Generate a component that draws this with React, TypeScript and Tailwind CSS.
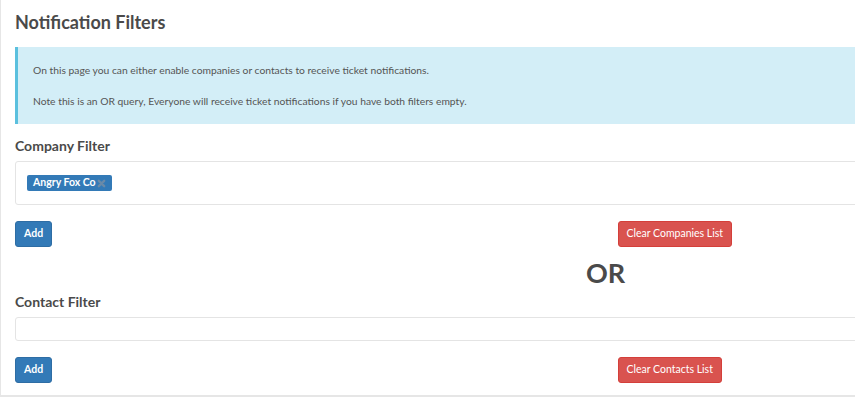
import React from 'react';

function RemoveIcon() {
  return (
    <svg width="9" height="9" viewBox="0 0 10 10" className="ml-[1px]">
      <path d="M2 2 L8 8 M8 2 L2 8" stroke="#6a8aa8" strokeWidth="2.6" strokeLinecap="round" />
    </svg>
  );
}

function ButtonRow({ clearLabel }: { clearLabel: string }) {
  return (
    <div className="grid grid-cols-2">
      <div>
        <button className="h-[26px] px-[8px] rounded-[3px] bg-[#337ab7] border border-[#2e6da4] text-white text-[10.5px] font-bold">
          Add
        </button>
      </div>
      <div className="pl-[12px]">
        <button className="h-[26px] px-[8px] rounded-[3px] bg-[#d9534f] border border-[#d43f3a] text-white text-[10.5px]">
          {clearLabel}
        </button>
      </div>
    </div>
  );
}

export default function App() {
  return (
    <div className="w-[855px] h-[398px] overflow-hidden bg-white" style={{ fontFamily: 'Lato, "Open Sans", sans-serif' }}>
      <div className="w-[1210px] border-l border-b-2 border-[#e6e6e6] px-[14px] pb-[12px]">
        <h1 className="pt-[9px] text-[18px] leading-[26px] font-bold text-[#4a4a4a]">
          Notification Filters
        </h1>

        <div className="mt-[12px] h-[77px] border-l-[3px] border-[#5bc0de] bg-[#d3eef7] pl-[15px] pt-[16px] text-[10.3px] text-[#555]">
          <p className="leading-[14px]">On this page you can either enable companies or contacts to receive ticket notifications.</p>
          <p className="mt-[17px] leading-[14px]">Note this is an OR query, Everyone will receive ticket notifications if you have both filters empty.</p>
        </div>

        <h2 className="mt-[13px] text-[14px] leading-[18px] font-bold text-[#4a4a4a]">Company Filter</h2>
        <div className="mt-[6px] h-[44px] rounded-[3px] border border-[#e4e4e4] flex items-center pl-[11px]">
          <span className="inline-flex items-center h-[16px] rounded-[2px] bg-[#337ab7] px-[6px] text-white text-[10.5px] font-bold">
            Angry Fox Co
            <RemoveIcon />
          </span>
        </div>

        <div className="mt-[14px]">
          <ButtonRow clearLabel="Clear Companies List" />
        </div>

        <div className="mt-[10px] text-center text-[27px] leading-[32px] font-bold text-[#4a4a4a]">OR</div>

        <h2 className="mt-[4px] text-[14px] leading-[18px] font-bold text-[#4a4a4a]">Contact Filter</h2>
        <div className="mt-[6px] h-[24px] rounded-[3px] border border-[#e4e4e4]" />

        <div className="mt-[14px]">
          <ButtonRow clearLabel="Clear Contacts List" />
        </div>
      </div>
    </div>
  );
}
